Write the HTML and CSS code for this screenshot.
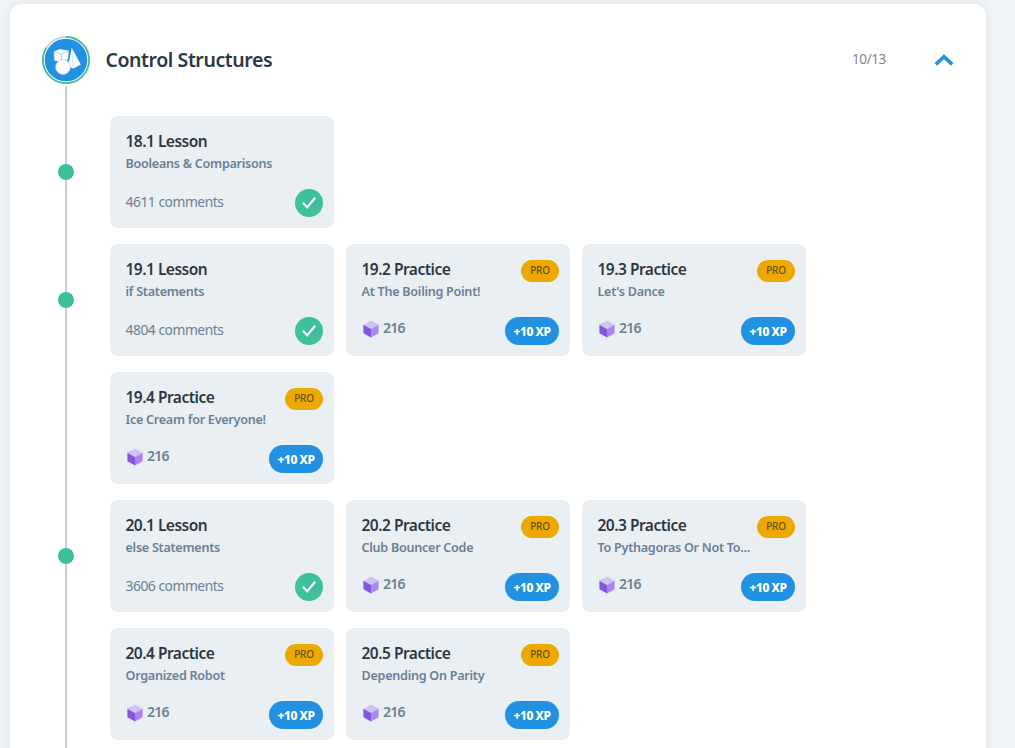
FILE: index.html
```
<!DOCTYPE html>
<html lang="en">
<head>
<meta charset="utf-8">
<title>Control Structures</title>
<link rel="stylesheet" href="styles.css">
</head>
<body>
<svg width="0" height="0" class="defs">
  <symbol id="cube" viewBox="0 0 16 18">
    <path d="M8 .6 15.6 4.8 8 9 .4 4.8Z" fill="#d1c3f5"/>
    <path d="M.4 4.8 8 9V17.4L.4 13.2Z" fill="#8257e0"/>
    <path d="M15.6 4.8 8 9V17.4L15.6 13.2Z" fill="#ac86f5"/>
  </symbol>
  <symbol id="check" viewBox="0 0 28 28">
    <circle cx="14" cy="14" r="14" fill="#3fbf9b"/>
    <path d="M8 13.7 12.3 18.2 20.2 8.8" fill="none" stroke="#f1f5f7" stroke-width="2.3"/>
  </symbol>
</svg>
<main class="module">
  <header class="module-head">
    <svg class="module-icon" viewBox="0 0 48 48">
      <circle cx="24" cy="24" r="23.1" fill="#fff" stroke="#c5d0da" stroke-width="1.7"/>
      <circle cx="24" cy="24" r="23.1" fill="none" stroke="#3fbf9b" stroke-width="1.7" pathLength="100" stroke-dasharray="84 16" transform="rotate(-90 24 24)"/>
      <circle cx="24" cy="24" r="21.3" fill="#2391e1"/>
      <path d="M29.8 12 38.8 28.5 31.5 32.5 26 30.5Z" fill="#fff"/>
      <path d="M29.8 12 31.3 32.5" stroke="#bedcf4" stroke-width=".8"/>
      <path d="M12 15.5 18 13.2 26.6 14.8 25.8 23.5 19 26 12.4 24.5Z" fill="#fff" stroke="#b6d8f4" stroke-width=".5"/>
      <path d="M12 15.8 19.5 18 26.5 15M19.5 18V26" fill="none" stroke="#a5cff1" stroke-width=".9"/>
      <circle cx="21" cy="31" r="7.4" fill="#fff" stroke="#a5cff1" stroke-width=".8"/>
    </svg>
    <h1 class="module-title">Control Structures</h1>
    <span class="module-count">10/13</span>
    <svg class="chevron" viewBox="0 0 20 12"><path d="M1.8 10.4 10 2.7 18.2 10.4" fill="none" stroke="#2391e1" stroke-width="3.6"/></svg>
  </header>
  <div class="module-body">
    <section class="group">
      <i class="dot"></i>
      <div class="cards">
        <article class="card"><div class="top"><h2>18.1 Lesson</h2></div><p>Booleans &amp; Comparisons</p><div class="foot"><span class="comments">4611 comments</span><svg class="done"><use href="#check"/></svg></div></article>
      </div>
    </section>
    <section class="group">
      <i class="dot"></i>
      <div class="cards">
        <article class="card"><div class="top"><h2>19.1 Lesson</h2></div><p>if Statements</p><div class="foot"><span class="comments">4804 comments</span><svg class="done"><use href="#check"/></svg></div></article>
        <article class="card"><div class="top"><h2>19.2 Practice</h2><span class="pro">PRO</span></div><p>At The Boiling Point!</p><div class="foot"><span class="bits"><svg class="cube"><use href="#cube"/></svg>216</span><span class="xp">+10 XP</span></div></article>
        <article class="card"><div class="top"><h2>19.3 Practice</h2><span class="pro">PRO</span></div><p>Let's Dance</p><div class="foot"><span class="bits"><svg class="cube"><use href="#cube"/></svg>216</span><span class="xp">+10 XP</span></div></article>
        <article class="card"><div class="top"><h2>19.4 Practice</h2><span class="pro">PRO</span></div><p>Ice Cream for Everyone!</p><div class="foot"><span class="bits"><svg class="cube"><use href="#cube"/></svg>216</span><span class="xp">+10 XP</span></div></article>
      </div>
    </section>
    <section class="group">
      <i class="dot"></i>
      <div class="cards">
        <article class="card"><div class="top"><h2>20.1 Lesson</h2></div><p>else Statements</p><div class="foot"><span class="comments">3606 comments</span><svg class="done"><use href="#check"/></svg></div></article>
        <article class="card"><div class="top"><h2>20.2 Practice</h2><span class="pro">PRO</span></div><p>Club Bouncer Code</p><div class="foot"><span class="bits"><svg class="cube"><use href="#cube"/></svg>216</span><span class="xp">+10 XP</span></div></article>
        <article class="card"><div class="top"><h2>20.3 Practice</h2><span class="pro">PRO</span></div><p>To Pythagoras Or Not To...</p><div class="foot"><span class="bits"><svg class="cube"><use href="#cube"/></svg>216</span><span class="xp">+10 XP</span></div></article>
        <article class="card"><div class="top"><h2>20.4 Practice</h2><span class="pro">PRO</span></div><p>Organized Robot</p><div class="foot"><span class="bits"><svg class="cube"><use href="#cube"/></svg>216</span><span class="xp">+10 XP</span></div></article>
        <article class="card"><div class="top"><h2>20.5 Practice</h2><span class="pro">PRO</span></div><p>Depending On Parity</p><div class="foot"><span class="bits"><svg class="cube"><use href="#cube"/></svg>216</span><span class="xp">+10 XP</span></div></article>
      </div>
    </section>
  </div>
</main>
</body>
</html>
```
FILE: styles.css
```
* { box-sizing: border-box; margin: 0; padding: 0; }
body {
  height: 748px;
  overflow: hidden;
  background: #f0f4f7;
  font-family: "Noto Sans", "Open Sans", sans-serif;
  color: #2d3846;
  padding: 4px 0 0 10px;
}
.defs { display: none; }
.module {
  width: 976px;
  height: 780px;
  background: #fff;
  border-radius: 12px;
  box-shadow: 0 0 8px rgba(45, 56, 70, .09);
  padding-top: 32px;
}
.module-head { display: flex; align-items: center; height: 48px; padding: 0 32px; }
.module-icon { width: 48px; height: 48px; margin-right: 15.5px; }
.module-title { flex: 1; font-size: 19.5px; font-weight: 600; letter-spacing: -.43px; line-height: 28px; }
.module-count { width: 34px; font-size: 13.5px; line-height: 20px; letter-spacing: -.4px; color: #7d8790; white-space: nowrap; padding-bottom: 2px; }
.chevron { width: 20px; height: 12px; margin-left: 48px; }
.module-body {
  margin-top: 2px;
  padding: 30px 0 0 48px;
  height: 696px;
  background: linear-gradient(#c5d0da, #c5d0da) 55px 0 / 2px 100% no-repeat;
}
.group { display: flex; margin-bottom: 16px; }
.dot { flex: none; width: 16px; height: 16px; margin: 48px 36px 0 0; border-radius: 50%; background: #3fbf9b; }
.cards { display: flex; flex-wrap: wrap; gap: 16px 12px; width: 700px; }
.card {
  display: flex;
  flex-direction: column;
  width: 224px;
  height: 112px;
  padding: 16px 11px 11px 15.5px;
  border-radius: 8px;
  background: #eaeff3;
}
.top { display: flex; justify-content: space-between; height: 23px; }
.top h2 { font-size: 15.5px; font-weight: 600; line-height: 18px; letter-spacing: -.5px; white-space: nowrap; }
.pro {
  width: 38px; height: 22px; border-radius: 11px;
  background: #eda900; color: #6a4f10;
  font-size: 10px; font-weight: 500; line-height: 21px; letter-spacing: -.3px; text-align: center;
}
.card p { font-size: 12.6px; font-weight: 600; line-height: 18px; letter-spacing: -.27px; color: #6b8096; white-space: nowrap; }
.foot { display: flex; justify-content: space-between; align-items: flex-end; margin-top: auto; height: 28px; }
.comments { font-size: 13.8px; line-height: 20px; letter-spacing: -.45px; color: #6b8096; padding-bottom: 5px; white-space: nowrap; }
.done { width: 28px; height: 28px; }
.bits { display: flex; align-items: center; gap: 4px; height: 18px; line-height: 16px; padding-bottom: 1px; margin: 0 0 8px 1.5px; font-size: 14px; font-weight: 600; letter-spacing: -.7px; color: #6b8096; }
.cube { width: 16px; height: 18px; margin-top: 2px; }
.xp {
  width: 54px; height: 28px; border-radius: 14px;
  background: #2391e1; color: #fff;
  font-size: 12px; font-weight: 800; line-height: 29px; letter-spacing: -.45px; text-align: center; white-space: nowrap;
}
```
